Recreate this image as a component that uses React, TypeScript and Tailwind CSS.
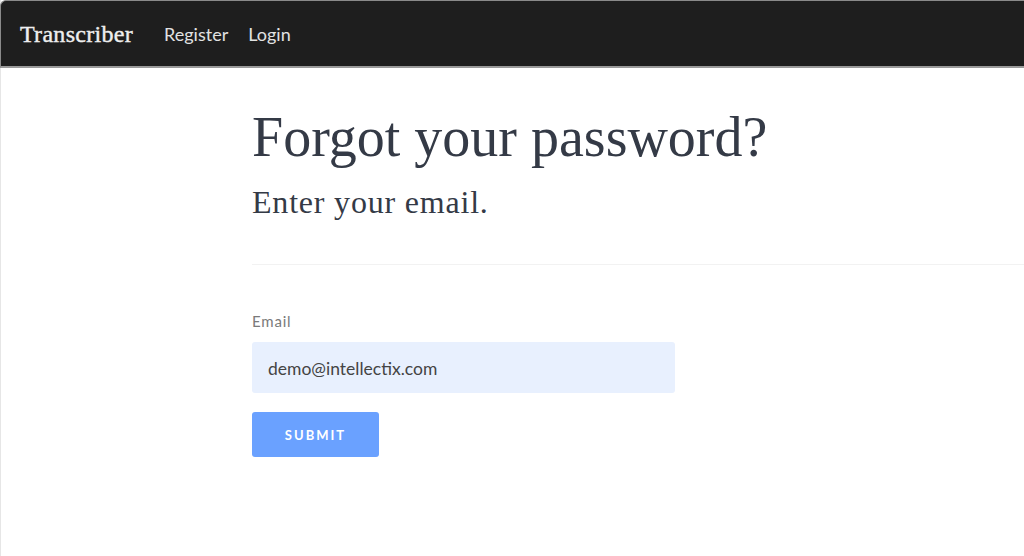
import React from 'react';

export default function App() {
  return (
    <div className="min-h-[556px] bg-white border-l border-[#e6e6e6] font-['Lato',sans-serif]">
      {/* Top bar */}
      <nav className="h-[68px] flex items-center bg-[#1e1e1e] border-t border-l border-b-2 border-[#8a8a8a] border-b-[#9a9a9a] rounded-tl-[6px] -ml-px px-[19px]">
        <span className="text-[24px] tracking-[0.3px] text-[#eeeeee] font-['Liberation_Serif',serif] [-webkit-text-stroke:0.4px_#eeeeee]">Transcriber</span>
        <div className="ml-[31px] pt-[1px] flex items-center gap-[20px] text-[18px] text-[#e2e2e2]">
          <span>Register</span>
          <span>Login</span>
        </div>
      </nav>

      <main className="pl-[251px] pt-[36px]">
        <h1 className="text-[56px] leading-[1.2] text-[#343a46] font-['Liberation_Serif',serif]">Forgot your password?</h1>
        <p className="mt-[7px] text-[32px] leading-[1.5] tracking-[0.8px] text-[#343a46] font-['Liberation_Serif',serif]">Enter your email.</p>
        <hr className="mt-[38px] border-t border-[#f2f2f2]" />

        <form className="pt-[45px] w-[423px]">
          <label className="block text-[15px] text-[#7a7a7a] tracking-[0.8px]">Email</label>
          <input
            defaultValue="demo@intellectix.com"
            className="mt-[9px] w-full h-[51px] px-[16px] pt-[2px] bg-[#e8f0fe] rounded-[3px] text-[17.5px] text-[#444444] outline-none"
          />
          <button
            type="button"
            className="mt-[19px] w-[127px] h-[45px] pt-[3px] bg-[#6aa1ff] rounded-[3px] text-white text-[13px] font-bold tracking-[2px]"
          >
            SUBMIT
          </button>
        </form>
      </main>
    </div>
  );
}
